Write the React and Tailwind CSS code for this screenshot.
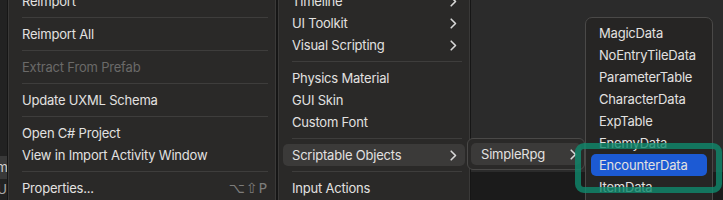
import React from "react";

const font = { fontFamily: 'Inter, "Noto Sans", "DejaVu Sans", sans-serif' };

function Chevron() {
  return (
    <svg width="7" height="11" viewBox="0 0 7 11" className="shrink-0">
      <path d="M1.2 1.2 L5.5 5.5 L1.2 9.8" fill="none" stroke="#d8d8d8" strokeWidth="1.6" strokeLinecap="round" strokeLinejoin="round" />
    </svg>
  );
}

function Item({ label, sub, disabled, active, shortcut }) {
  return (
    <div
      className={`h-[22px] flex items-center justify-between rounded-[5px] pl-[9px] pr-[8px] ${
        active ? "bg-[#3b3a39]" : ""
      }`}
    >
      <span className={`text-[13px] leading-none tracking-[-0.2px] whitespace-nowrap ${disabled ? "text-[#6b6a69]" : "text-[#e2e1e0]"}`}>
        {label}
      </span>
      {sub && <Chevron />}
      {shortcut && (
        <span className="text-[14px] leading-none text-[#7d7c7b] tracking-[1px] -mr-[5px]" style={{ fontFamily: '"DejaVu Sans", Inter, sans-serif' }}>
          {shortcut}
        </span>
      )}
    </div>
  );
}

function Sep() {
  return (
    <div className="h-[11px] flex items-center pl-[9px] pr-[3px]">
      <div className="h-px w-full bg-[#3e3d3c]" />
    </div>
  );
}

export default function App() {
  return (
    <div className="w-[723px] h-[200px] overflow-hidden flex bg-[#2b2b2b]" style={font}>
      {/* left window strip */}
      <div className="w-[7px] shrink-0 flex flex-col bg-[#222222] overflow-hidden">
        <div className="h-[156px]" />
        <div className="h-[23px] bg-[#393939] flex items-center justify-end overflow-hidden">
          <span className="text-[13px] text-[#cfcfcf] leading-none -mr-[1px]">m</span>
        </div>
        <div className="flex-1 flex items-center justify-end overflow-hidden">
          <span className="text-[13px] text-[#a9a9a9] leading-none whitespace-nowrap">r U</span>
        </div>
      </div>

      {/* menu 1 */}
      <div className="w-[270px] shrink-0 h-[230px] -mt-[15px] bg-[#2a2928] border border-[#161616] shadow-[inset_0_0_0_1px_#3a3938] rounded-[7px] px-[5px] pt-[4px]">
        <Item label="Reimport" />
        <Sep />
        <Item label="Reimport All" />
        <Sep />
        <Item label="Extract From Prefab" disabled />
        <Sep />
        <Item label="Update UXML Schema" />
        <Sep />
        <Item label="Open C# Project" />
        <Item label="View in Import Activity Window" />
        <Sep />
        <Item label="Properties..." shortcut="⌥⇧P" />
      </div>

      {/* menu 2 */}
      <div className="w-[194px] shrink-0 h-[230px] -mt-[15px] bg-[#2a2928] border border-[#161616] shadow-[inset_0_0_0_1px_#3a3938] rounded-[7px] px-[5px] pt-[4px]">
        <Item label="Timeline" sub />
        <Item label="UI Toolkit" sub />
        <Item label="Visual Scripting" sub />
        <Sep />
        <Item label="Physics Material" />
        <Item label="GUI Skin" />
        <Item label="Custom Font" />
        <Sep />
        <Item label="Scriptable Objects" sub active />
        <Sep />
        <Item label="Input Actions" />
      </div>

      {/* right area */}
      <div className="relative flex-1 flex flex-col">
        <div className="flex-1 bg-[#2b2b2b]" />
        <div className="h-[28px] bg-[#1b1b1b]" />

        {/* submenu SimpleRpg */}
        <div className="absolute left-[-4px] top-[138px] w-[118px] h-[32px] bg-[#2a2928] border border-[#4a4948] rounded-[6px] px-[3px] pt-[4px]">
          <div className="h-[22px] flex items-center justify-between rounded-[5px] bg-[#3b3a39] pl-[10px] pr-[4px]">
            <span className="text-[13px] leading-none tracking-[-0.2px] text-[#e2e1e0]">SimpleRpg</span>
            <Chevron />
          </div>
        </div>

        {/* submenu data list */}
        <div className="absolute left-[114px] top-[17px] w-[128px] h-[200px] bg-[#262524] border border-[#4a4948] rounded-[7px] px-[5px] pt-[4px]">
          {["MagicData", "NoEntryTileData", "ParameterTable", "CharacterData", "ExpTable", "EnemyData", "EncounterData", "ItemData"].map((n) => (
            <div
              key={n}
              className={`h-[22px] flex items-center rounded-[5px] pl-[8px] ${n === "EncounterData" ? "bg-[#1c5ad4]" : ""}`}
            >
              <span className="text-[13px] leading-none tracking-[-0.2px] text-[#e2e1e0] whitespace-nowrap">{n}</span>
            </div>
          ))}
        </div>

        {/* annotation */}
        <div className="absolute left-[104px] top-[143px] w-[147px] h-[50px] border-[6px] border-[#0f8a6dcc] rounded-[9px]" />
      </div>
    </div>
  );
}
